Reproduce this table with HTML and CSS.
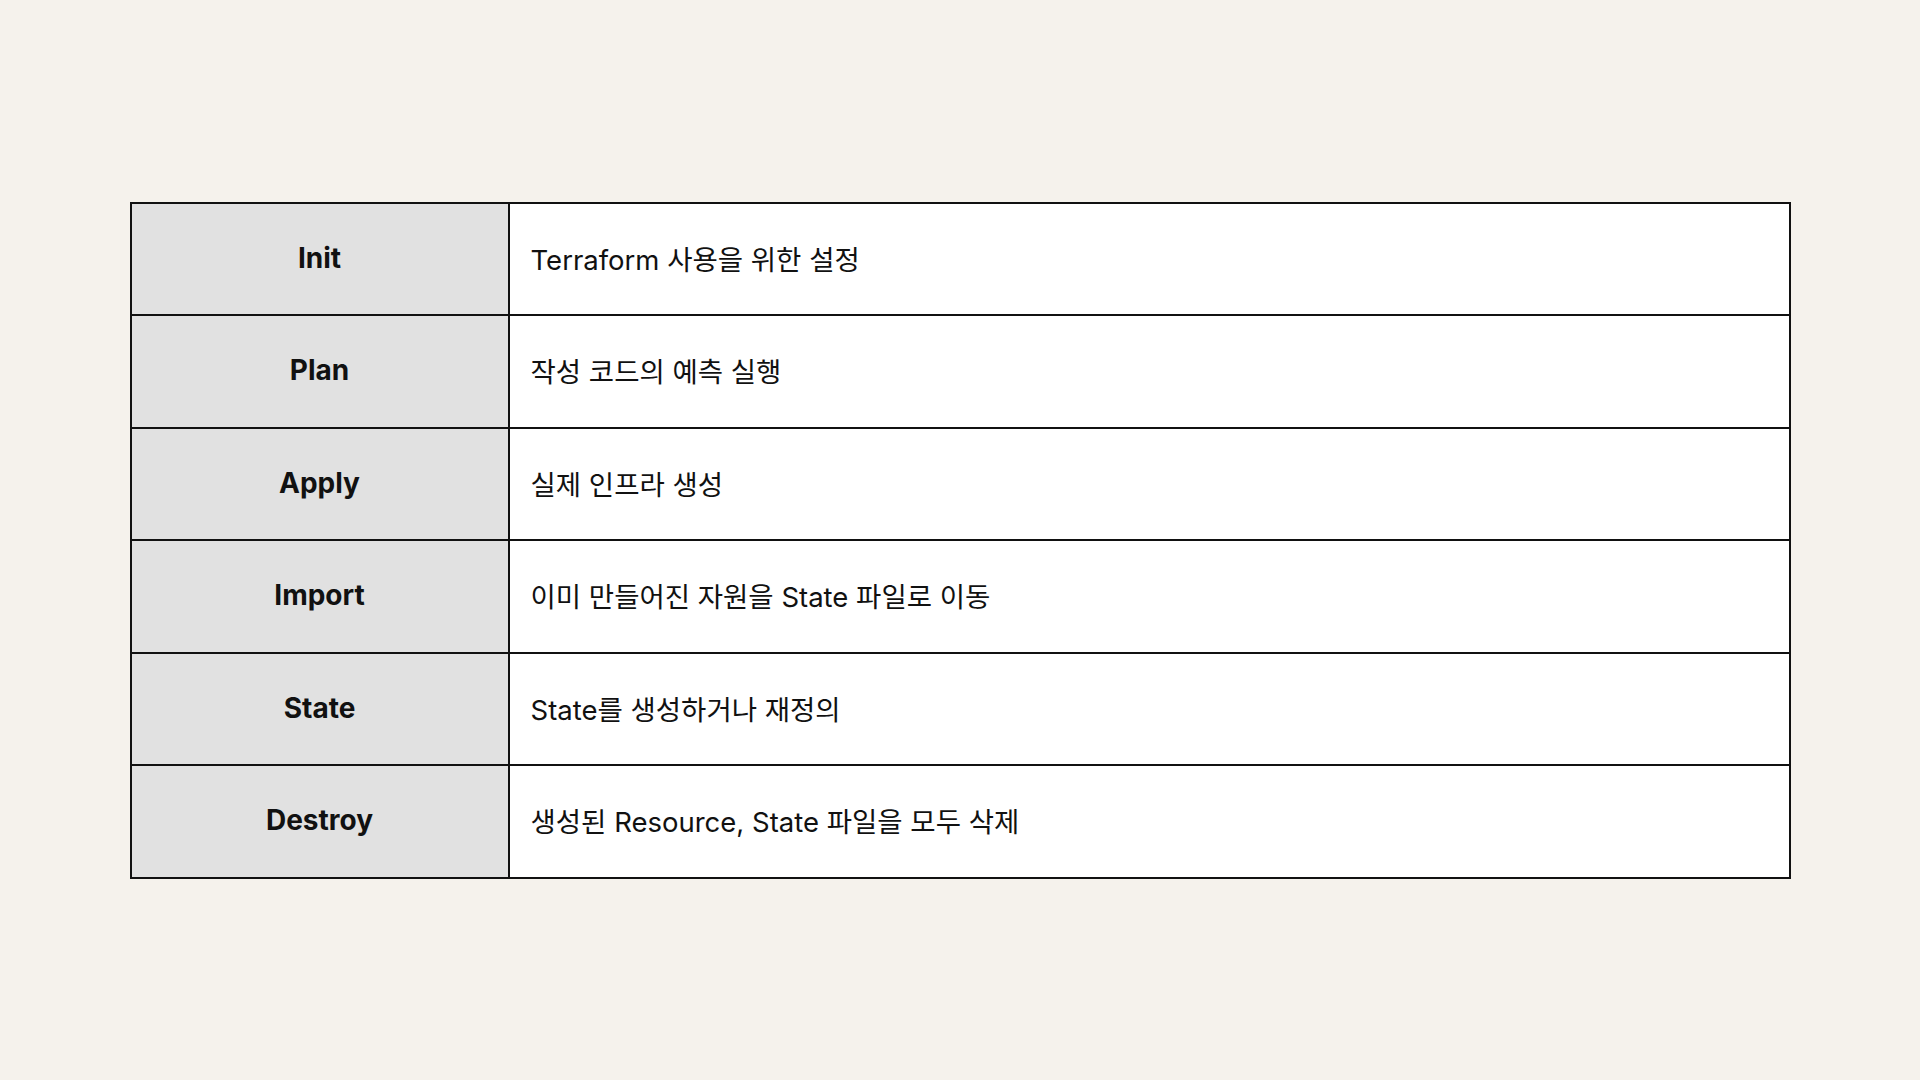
FILE: index.html
```html
<!DOCTYPE html>
<html lang="ko">
<head>
<meta charset="utf-8">
<title>Terraform Commands</title>
<link rel="stylesheet" href="styles.css">
</head>
<body>
<main class="page">
  <div class="table">
    <div class="row">
      <div class="key">Init</div>
      <div class="val">Terraform 사용을 위한 설정</div>
    </div>
    <div class="row">
      <div class="key">Plan</div>
      <div class="val">작성 코드의 예측 실행</div>
    </div>
    <div class="row">
      <div class="key">Apply</div>
      <div class="val">실제 인프라 생성</div>
    </div>
    <div class="row">
      <div class="key">Import</div>
      <div class="val">이미 만들어진 자원을 State 파일로 이동</div>
    </div>
    <div class="row">
      <div class="key">State</div>
      <div class="val">State를 생성하거나 재정의</div>
    </div>
    <div class="row">
      <div class="key">Destroy</div>
      <div class="val">생성된 Resource, State 파일을 모두 삭제</div>
    </div>
  </div>
</main>
</body>
</html>
```

FILE: styles.css
```css
html, body {
  margin: 0;
  padding: 0;
  background: #f5f2ec;
}

.page {
  width: 1920px;
  height: 1080px;
  display: flex;
  align-items: center;
  justify-content: center;
  font-family: "Inter", "Noto Sans CJK KR", sans-serif;
  color: #111;
}

.table {
  width: 1661px;
  height: 677px;
  box-sizing: border-box;
  border: 2px solid #111;
  display: grid;
  grid-template-rows: repeat(6, 1fr);
  row-gap: 2px;
  background: #111;
}

.row {
  display: grid;
  grid-template-columns: 376px 1fr;
  column-gap: 2px;
}

.key {
  background: #e1e1e1;
  display: flex;
  align-items: center;
  justify-content: center;
  font-weight: 700;
  font-size: 28px;
  padding-bottom: 2px;
}

.val {
  background: #fff;
  display: flex;
  align-items: center;
  padding-left: 21px;
  padding-bottom: 2px;
  font-size: 27.5px;
  font-weight: 400;
}
```
